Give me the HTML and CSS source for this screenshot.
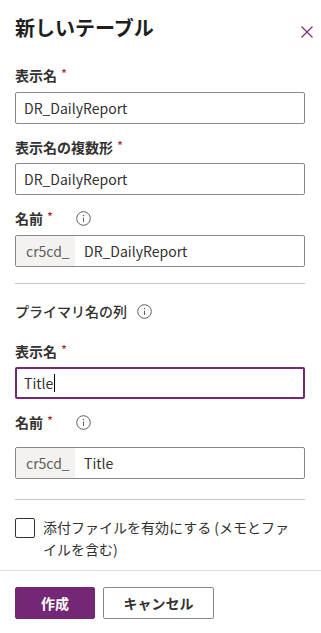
FILE: index.html
```html
<!DOCTYPE html>
<html lang="ja">
<head>
<meta charset="utf-8">
<link rel="stylesheet" href="styles.css">
</head>
<body>
<div class="panel">
  <div class="header">
    <h1 class="title">新しいテーブル</h1>
    <button class="close" aria-label="閉じる">
      <svg width="12" height="12" viewBox="0 0 12 12"><path d="M0.5 0.5 L11.5 11.5 M11.5 0.5 L0.5 11.5" stroke="#742774" stroke-width="1.1" fill="none"/></svg>
    </button>
  </div>

  <div class="content">
    <div class="label l1">表示名<span class="req">*</span></div>
    <div class="field">DR_DailyReport</div>

    <div class="label l2">表示名の複数形<span class="req">*</span></div>
    <div class="field">DR_DailyReport</div>

    <div class="label l3">名前<span class="req">*</span><span class="info">
      <svg width="15" height="15" viewBox="0 0 15 15"><circle cx="7.5" cy="7.5" r="6.8" stroke="#605e5c" stroke-width="1" fill="none"/><circle cx="7.5" cy="4.6" r="0.75" fill="#605e5c"/><path d="M7.5 6.6 V11" stroke="#605e5c" stroke-width="1"/></svg>
    </span></div>
    <div class="field prefixed"><span class="prefix">cr5cd_</span><span class="val">DR_DailyReport</span></div>

    <hr class="divider d1">

    <div class="section">プライマリ名の列<span class="info">
      <svg width="15" height="15" viewBox="0 0 15 15"><circle cx="7.5" cy="7.5" r="6.8" stroke="#605e5c" stroke-width="1" fill="none"/><circle cx="7.5" cy="4.6" r="0.75" fill="#605e5c"/><path d="M7.5 6.6 V11" stroke="#605e5c" stroke-width="1"/></svg>
    </span></div>

    <div class="label l4">表示名<span class="req">*</span></div>
    <div class="field focused">Title<span class="caret"></span></div>

    <div class="label l5">名前<span class="req">*</span><span class="info">
      <svg width="15" height="15" viewBox="0 0 15 15"><circle cx="7.5" cy="7.5" r="6.8" stroke="#605e5c" stroke-width="1" fill="none"/><circle cx="7.5" cy="4.6" r="0.75" fill="#605e5c"/><path d="M7.5 6.6 V11" stroke="#605e5c" stroke-width="1"/></svg>
    </span></div>
    <div class="field prefixed f5"><span class="prefix">cr5cd_</span><span class="val">Title</span></div>

    <hr class="divider d2">

    <div class="check">
      <span class="box"></span>
      <span class="check-text">添付ファイルを有効にする (メモとファイルを含む)</span>
    </div>
  </div>

  <hr class="footer-line">

  <div class="footer">
    <button class="btn primary">作成</button>
    <button class="btn secondary">キャンセル</button>
  </div>
</div>
</body>
</html>
```

FILE: styles.css
```css
* { box-sizing: border-box; }
html, body { margin: 0; padding: 0; background: #ffffff; }
body {
  font-family: "Noto Sans CJK JP", "Noto Sans", sans-serif;
  font-size: 14px;
  color: #323130;
  width: 321px;
}
.panel { display: flex; flex-direction: column; }

.header {
  display: flex;
  align-items: flex-start;
  justify-content: space-between;
  padding: 14px 8px 0 15px;
  height: 42px;
}
.title {
  margin: 0;
  font-size: 20px;
  line-height: 28px;
  font-weight: 700;
  color: #201f1e;
}
.close {
  border: 0;
  background: transparent;
  padding: 0;
  width: 12px;
  height: 12px;
  margin-top: 12px;
  display: flex;
}

.content {
  display: flex;
  flex-direction: column;
  padding: 0 16px 0 15px;
}

.label {
  display: flex;
  align-items: center;
  height: 20px;
  line-height: 20px;
  font-weight: 700;
  color: #323130;
}
.req {
  color: #a4262c;
  margin-left: 4px;
  font-weight: 400;
  font-size: 13px;
  align-self: flex-start;
  line-height: 18px;
}
.info { display: inline-flex; margin-left: 23px; }
.l1 { margin-top: 23px; margin-bottom: 7px; }
.l2 { margin-top: 13px; margin-bottom: 6px; }
.l3 { margin-top: 13px; margin-bottom: 7px; }
.l4 { margin-top: 20px; margin-bottom: 6px; }
.l5 { margin-top: 13px; margin-bottom: 15px; }

.field {
  height: 32px;
  border: 1px solid #8a8886;
  border-radius: 2px;
  padding: 0 8px;
  display: flex;
  align-items: center;
  line-height: 20px;
  color: #323130;
}
.field.prefixed { padding: 0; }
.prefix {
  background: #f3f2f1;
  color: #605e5c;
  height: 100%;
  width: 59px;
  display: flex;
  align-items: center;
  padding-left: 10px;
}
.val { padding-left: 9px; }
.focused { border: 2px solid #742774; padding: 0 7px; }
.caret {
  display: inline-block;
  width: 1px;
  height: 18px;
  background: #000;
  margin-left: 1px;
}

.divider {
  border: 0;
  border-top: 1px solid #c8c6c4;
  margin: 0;
  height: 0;
}
.d1 { margin-top: 16px; }
.d2 { margin-top: 20px; }

.section {
  display: flex;
  align-items: center;
  height: 20px;
  margin-top: 17px;
  font-weight: 500;
  color: #323130;
}
.section .info { margin-left: 10px; }

.check {
  display: flex;
  align-items: flex-start;
  margin-top: 16px;
}
.box {
  flex: none;
  width: 20px;
  height: 20px;
  border: 1px solid #323130;
  border-radius: 2px;
  margin-top: 2px;
}
.check-text {
  margin-left: 8px;
  line-height: 22px;
  max-width: 250px;
  color: #323130;
}

.footer-line {
  border: 0;
  border-top: 1px solid #e1dfdd;
  margin: 10px 0 0 0;
  height: 0;
}
.footer {
  display: flex;
  gap: 8px;
  padding: 16px 15px 0 15px;
}
.btn {
  height: 32px;
  border-radius: 2px;
  font-family: "Noto Sans CJK JP", "Noto Sans", sans-serif;
  font-size: 14px;
  font-weight: 700;
  padding: 0;
  display: flex;
  align-items: center;
  justify-content: center;
}
.primary {
  width: 80px;
  background: #742774;
  border: 1px solid #742774;
  color: #ffffff;
}
.secondary {
  width: 111px;
  background: #ffffff;
  border: 1px solid #8a8886;
  color: #323130;
}
```
